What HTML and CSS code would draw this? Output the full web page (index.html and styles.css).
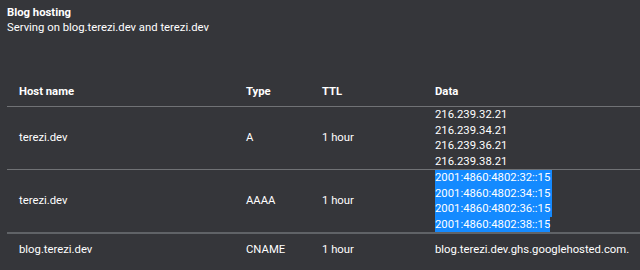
FILE: index.html
```html
<!DOCTYPE html>
<html>
<head>
<meta charset="utf-8">
<link rel="stylesheet" href="styles.css">
</head>
<body>
<div class="page">
  <div class="intro">
    <div class="title">Blog hosting</div>
    <div class="subtitle">Serving on blog.terezi.dev and terezi.dev</div>
  </div>
  <table class="records">
    <colgroup>
      <col class="c-host"><col class="c-type"><col class="c-ttl"><col class="c-data">
    </colgroup>
    <thead>
      <tr><th>Host name</th><th>Type</th><th>TTL</th><th>Data</th></tr>
    </thead>
    <tbody>
      <tr class="multi">
        <td>terezi.dev</td><td>A</td><td>1 hour</td>
        <td class="data">
          <div>216.239.32.21</div>
          <div>216.239.34.21</div>
          <div>216.239.36.21</div>
          <div>216.239.38.21</div>
        </td>
      </tr>
      <tr class="multi thick">
        <td>terezi.dev</td><td>AAAA</td><td>1 hour</td>
        <td class="data">
          <div class="sel">2001:4860:4802:32::15</div>
          <div class="sel">2001:4860:4802:34::15</div>
          <div class="sel">2001:4860:4802:36::15</div>
          <div class="sel last">2001:4860:4802:38::15</div>
        </td>
      </tr>
      <tr class="single">
        <td>blog.terezi.dev</td><td>CNAME</td><td>1 hour</td>
        <td class="data">blog.terezi.dev.ghs.googlehosted.com.</td>
      </tr>
    </tbody>
  </table>
</div>
</body>
</html>
```
FILE: styles.css
```css
html, body {
  margin: 0;
  padding: 0;
  background: #35363a;
}
body {
  font-family: Roboto, "Liberation Sans", sans-serif;
  font-size: 11.3px;
  color: #ffffff;
  width: 640px;
  height: 270px;
  overflow: hidden;
}
.page {
  padding: 5px 0 0 7px;
}
.intro {
  line-height: 15px;
}
.title {
  font-weight: 700;
}
.records {
  margin-top: 41px;
  width: 633px;
  border-collapse: collapse;
  table-layout: fixed;
}
.c-host { width: 227px; }
.c-type { width: 76px; }
.c-ttl { width: 113px; }
.records th {
  text-align: left;
  font-weight: 700;
  padding: 8px 12px 7px;
  line-height: 15px;
  border-bottom: 1px solid #707275;
}
.records td {
  padding: 0 12px;
  vertical-align: middle;
  white-space: nowrap;
}
.records tr.multi td {
  border-bottom: 1px solid #707275;
  line-height: 15.5px;
}
.records tr.thick td {
  border-bottom: 2px solid #606367;
}
.records tr.single td {
  padding-top: 8px;
  padding-bottom: 8px;
  line-height: 15px;
}
.data .sel {
  background: #148aff;
  color: #ffffff;
  width: fit-content;
  padding-right: 2px;
}
.data .sel.last {
  padding-right: 0;
}
```
